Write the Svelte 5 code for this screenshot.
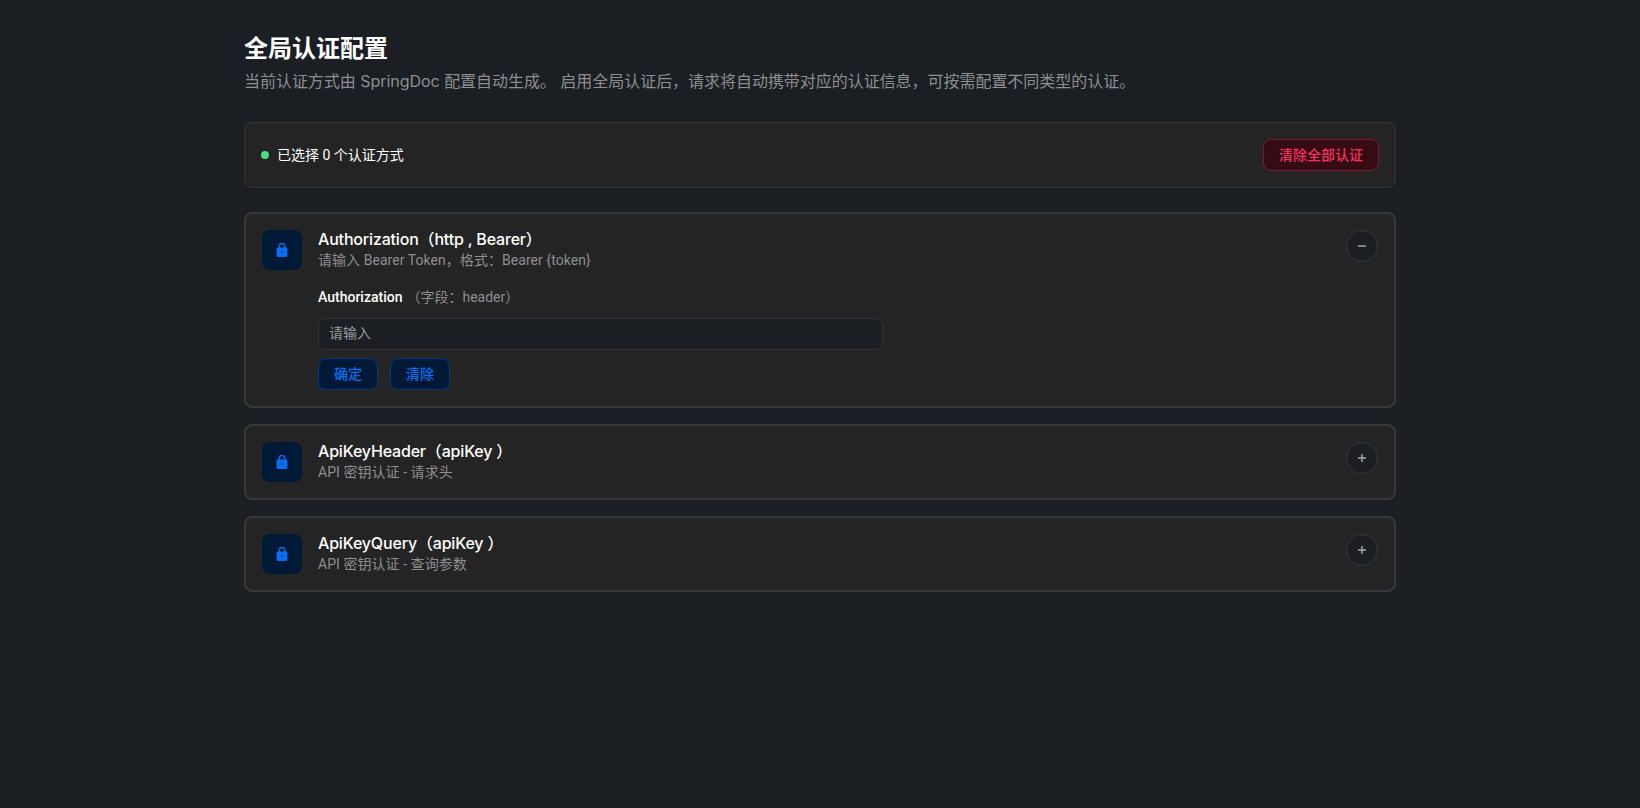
<script>
  const schemes = [
    { name: 'Authorization（http , Bearer）', desc: '请输入 Bearer Token，格式：Bearer {token}', open: true },
    { name: 'ApiKeyHeader（apiKey ）', desc: 'API 密钥认证 - 请求头', open: false },
    { name: 'ApiKeyQuery（apiKey ）', desc: 'API 密钥认证 - 查询参数', open: false }
  ];
</script>

<main class="page">
  <h1>全局认证配置</h1>
  <p class="sub">当前认证方式由 SpringDoc 配置自动生成。 启用全局认证后，请求将自动携带对应的认证信息，可按需配置不同类型的认证。</p>

  <section class="status">
    <div class="count"><span class="dot"></span>已选择 0 个认证方式</div>
    <button class="danger">清除全部认证</button>
  </section>

  <div class="list">
    {#each schemes as s}
      <article class="card">
        <div class="icon">
          <svg width="14" height="14" viewBox="0 0 14 14" aria-hidden="true">
            <path fill="none" stroke="#0a6ef2" stroke-width="1.3" d="M4.2 5V3.4a2.8 2.8 0 0 1 5.6 0V5" />
            <path fill="#0a6ef2" fill-rule="evenodd" d="M2.6 4.4h8.8a1 1 0 0 1 1 1v7.4a1.2 1.2 0 0 1-1.2 1.2H2.8a1.2 1.2 0 0 1-1.2-1.2V5.400a1 1 0 0 1 1-1Zm3.800 4.200v1.300h1.200V8.600Z" />
          </svg>
        </div>
        <div class="body">
          <div class="name">{s.name}</div>
          <div class="desc">{s.desc}</div>
          {#if s.open}
            <div class="form">
              <div class="label"><b>Authorization</b><span>（字段：header）</span></div>
              <input placeholder="请输入" />
              <div class="actions">
                <button class="primary">确定</button>
                <button class="primary">清除</button>
              </div>
            </div>
          {/if}
        </div>
        <button class="toggle" aria-label={s.open ? '收起' : '展开'}>
          <svg width="10" height="10" viewBox="0 0 10 10" aria-hidden="true">
            <path d={s.open ? 'M1 5h8' : 'M1 5h8M5 1v8'} stroke="#a8a9ac" stroke-width="1.4" fill="none" />
          </svg>
        </button>
      </article>
    {/each}
  </div>
</main>

<style>
  :global(body) {
    margin: 0;
    background: #1b1e23;
    min-height: 808px;
  }
  .page {
    box-sizing: border-box;
    width: 1152px;
    margin: 0 auto;
    padding-top: 33px;
    font-family: Roboto, "Noto Sans CJK SC", sans-serif;
    color: #fff;
  }
  h1 {
    margin: 0;
    font-size: 24px;
    line-height: 32px;
    font-weight: 600;
    color: #fff;
  }
  .sub {
    margin: 4px 0 0;
    font-family: Inter, "Noto Sans CJK SC", sans-serif;
    font-size: 16px;
    line-height: 24px;
    letter-spacing: -0.035px;
    color: #8d8e91;
  }
  .status {
    box-sizing: border-box;
    height: 66px;
    margin-top: 29px;
    padding: 0 16px;
    display: flex;
    align-items: center;
    justify-content: space-between;
    background: #242424;
    border: 1px solid #333438;
    border-radius: 8px;
  }
  .count {
    display: flex;
    align-items: center;
    font-size: 14px;
    line-height: 20px;
    padding-bottom: 1px;
    color: #fff;
  }
  .dot {
    width: 8px;
    height: 8px;
    margin-right: 8px;
    border-radius: 50%;
    background: #4ade80;
  }
  button {
    font: inherit;
    cursor: pointer;
    padding: 0;
  }
  .danger {
    box-sizing: border-box;
    width: 116px;
    height: 32px;
    padding-bottom: 2px;
    font-size: 14px;
    font-weight: 500;
    color: #f7325f;
    background: #360b14;
    border: 1px solid #7a1a33;
    border-radius: 8px;
  }
  .list {
    margin-top: 24px;
    display: flex;
    flex-direction: column;
    gap: 16px;
  }
  .card {
    box-sizing: border-box;
    display: flex;
    align-items: flex-start;
    padding: 16px;
    background: #242424;
    border: 2px solid #36373b;
    border-radius: 8px;
  }
  .icon {
    flex: none;
    width: 40px;
    height: 40px;
    display: flex;
    align-items: center;
    justify-content: center;
    background: #001936;
    border-radius: 8px;
  }
  .body {
    flex: 1;
    min-width: 0;
    margin-left: 16px;
  }
  .name {
    font-family: Inter, "Noto Sans CJK SC", sans-serif;
    font-size: 16px;
    line-height: 18px;
    letter-spacing: -0.18px;
    font-weight: 500;
    color: #fff;
  }
  .desc {
    margin-top: 2px;
    font-size: 14px;
    line-height: 20px;
    letter-spacing: 0.05px;
    color: #8d8e91;
  }
  .form {
    margin-top: 17px;
  }
  .label {
    font-size: 14px;
    line-height: 20px;
    color: #8d8e91;
  }
  .label b {
    font-weight: 500;
    color: #fff;
  }
  .label span {
    margin-left: 4px;
  }
  input {
    display: block;
    box-sizing: border-box;
    width: 565px;
    height: 32px;
    margin-top: 11px;
    padding: 0 10px 2px;
    font: inherit;
    font-size: 14px;
    background: #1b1e23;
    border: 1px solid #333438;
    border-radius: 8px;
    outline: none;
  }
  input::placeholder {
    color: #9a9b9e;
    opacity: 1;
  }
  .actions {
    display: flex;
    gap: 12px;
    margin-top: 8px;
  }
  .primary {
    box-sizing: border-box;
    width: 60px;
    height: 32px;
    padding-bottom: 2px;
    font-size: 14px;
    font-weight: 500;
    color: #0a6ef2;
    background: #001936;
    border: 1px solid #063a80;
    border-radius: 8px;
  }
  .toggle {
    flex: none;
    box-sizing: border-box;
    width: 32px;
    height: 32px;
    display: flex;
    align-items: center;
    justify-content: center;
    background: #1b1e23;
    border: 1px solid #36373b;
    border-radius: 50%;
  }
</style>
